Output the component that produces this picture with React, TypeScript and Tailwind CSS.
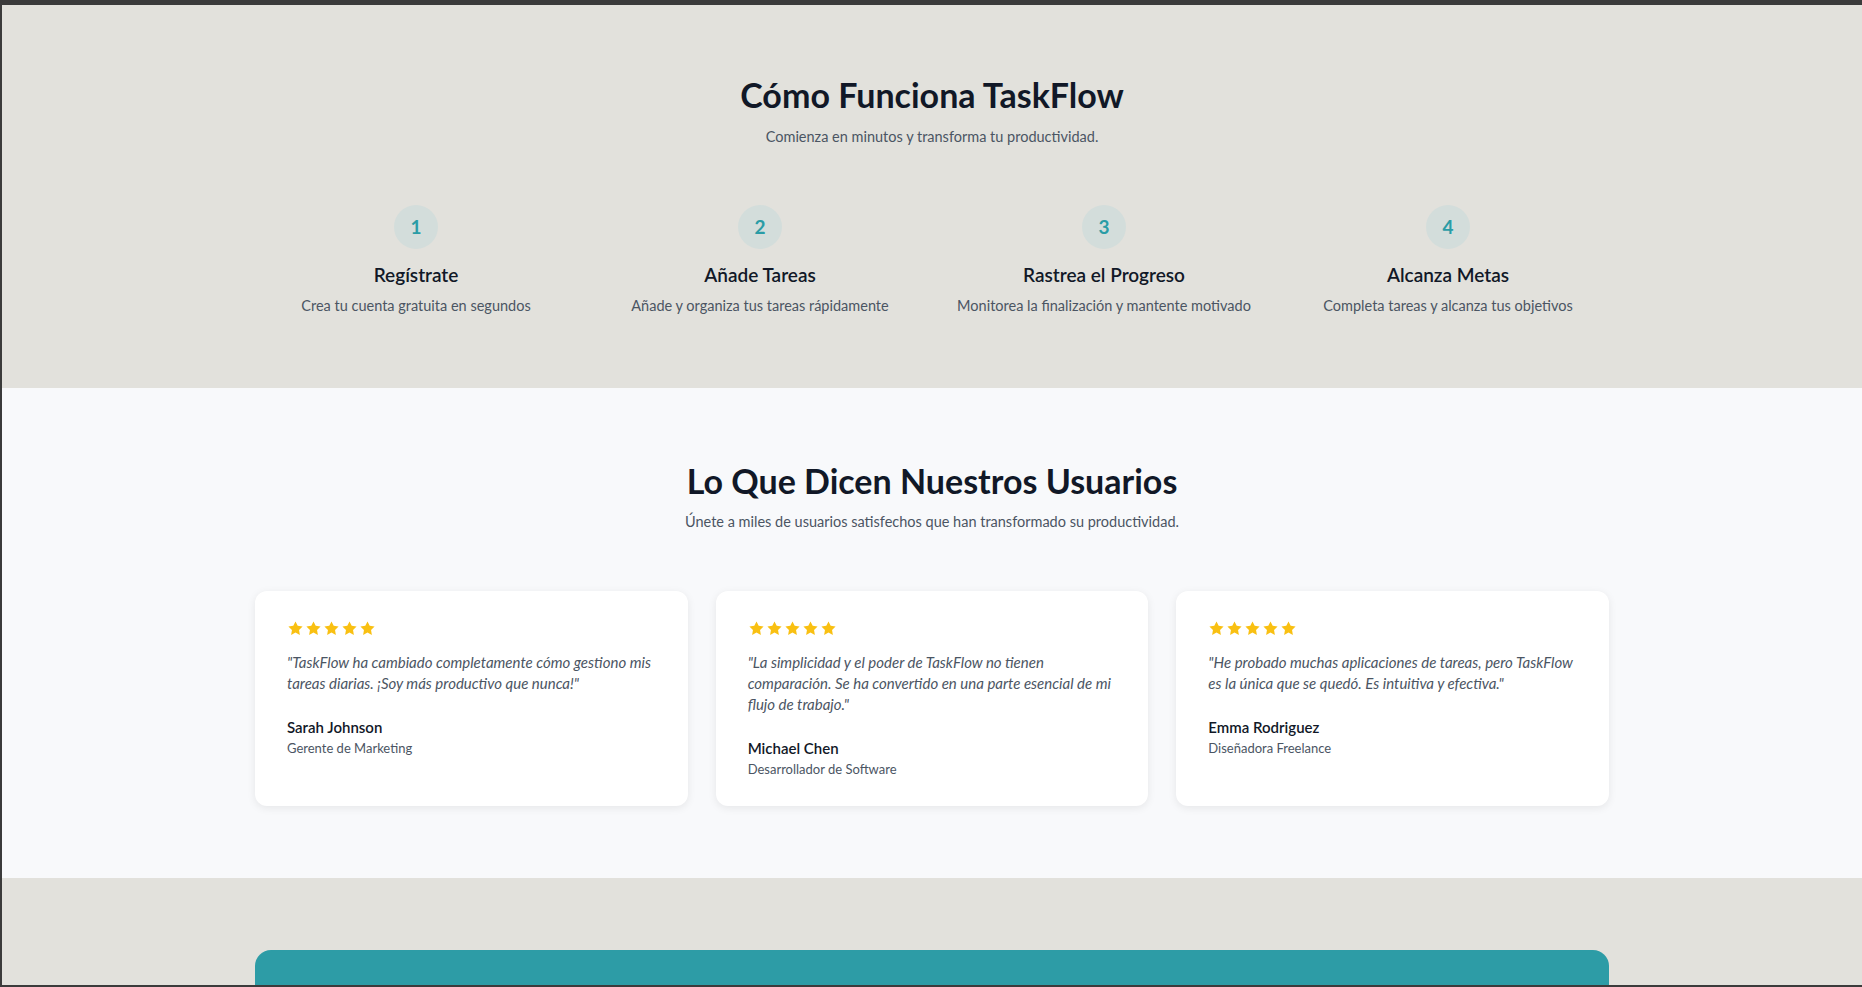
const steps = [
  { n: "1", title: "Regístrate", desc: "Crea tu cuenta gratuita en segundos" },
  { n: "2", title: "Añade Tareas", desc: "Añade y organiza tus tareas rápidamente" },
  { n: "3", title: "Rastrea el Progreso", desc: "Monitorea la finalización y mantente motivado" },
  { n: "4", title: "Alcanza Metas", desc: "Completa tareas y alcanza tus objetivos" },
];

const testimonials = [
  {
    quote: "\"TaskFlow ha cambiado completamente cómo gestiono mis tareas diarias. ¡Soy más productivo que nunca!\"",
    name: "Sarah Johnson",
    role: "Gerente de Marketing",
  },
  {
    quote: "\"La simplicidad y el poder de TaskFlow no tienen comparación. Se ha convertido en una parte esencial de mi flujo de trabajo.\"",
    name: "Michael Chen",
    role: "Desarrollador de Software",
  },
  {
    quote: "\"He probado muchas aplicaciones de tareas, pero TaskFlow es la única que se quedó. Es intuitiva y efectiva.\"",
    name: "Emma Rodriguez",
    role: "Diseñadora Freelance",
  },
];

function Star() {
  return (
    <svg viewBox="0 0 24 24" className="h-[17px] w-[17px] fill-[#f9c012]">
      <path d="M12 2l3.09 6.26L22 9.27l-5 4.87 1.18 6.88L12 17.77l-6.18 3.25L7 14.14 2 9.27l6.91-1.01L12 2z" />
    </svg>
  );
}

export default function App() {
  return (
    <div className="h-[987px] overflow-hidden border-t-[5px] border-b-2 border-l-2 border-[#3b3b3b] font-['Lato',sans-serif]">
      {/* Cómo funciona */}
      <section className="bg-[#e2e1dc] pt-[70px] pb-[71px]">
        <div className="mx-auto w-[1354px]">
          <h2 className="text-center text-[34px] leading-[40px] font-bold text-[#111827]">
            Cómo Funciona TaskFlow
          </h2>
          <p className="mt-[10px] text-center text-[14.5px] leading-6 text-[#4b5563]">
            Comienza en minutos y transforma tu productividad.
          </p>

          <div className="mt-[56px] grid grid-cols-4 gap-[22px]">
            {steps.map((s) => (
              <div key={s.n} className="flex flex-col items-center text-center">
                <div className="flex h-11 w-11 items-center justify-center rounded-full bg-[#d3dddb] text-[19px] font-bold text-[#2a9ca6]">
                  {s.n}
                </div>
                <h3 className="mt-[12px] text-[19px] leading-7 font-semibold text-[#111827]">{s.title}</h3>
                <p className="mt-[6px] text-[14.5px] leading-[22px] text-[#4b5563]">{s.desc}</p>
              </div>
            ))}
          </div>
        </div>
      </section>

      {/* Testimonios */}
      <section className="bg-[#f8f9fb] pt-[73px] pb-[72px]">
        <div className="mx-auto w-[1354px]">
          <h2 className="text-center text-[34px] leading-[40px] font-bold text-[#111827]">
            Lo Que Dicen Nuestros Usuarios
          </h2>
          <p className="mt-[9px] text-center text-[14.5px] leading-6 text-[#4b5563]">
            Únete a miles de usuarios satisfechos que han transformado su productividad.
          </p>

          <div className="mt-[57px] grid grid-cols-3 gap-7">
            {testimonials.map((t) => (
              <div
                key={t.name}
                className="rounded-xl bg-white px-8 pt-[29px] pb-[27px] shadow-[0_2px_8px_rgba(0,0,0,0.08)]"
              >
                <div className="flex gap-px">
                  <Star />
                  <Star />
                  <Star />
                  <Star />
                  <Star />
                </div>
                <p className="mt-[15px] text-[15px] leading-[21px] italic text-[#4b5563]">{t.quote}</p>
                <p className="mt-[22px] text-[15px] leading-[22px] font-semibold text-[#111827]">{t.name}</p>
                <p className="text-[13px] leading-5 text-[#4b5563]">{t.role}</p>
              </div>
            ))}
          </div>
        </div>
      </section>

      {/* CTA */}
      <section className="bg-[#e2e1dc] pt-[72px] pb-20">
        <div className="mx-auto h-[260px] w-[1354px] rounded-2xl bg-[#2d9ca6]" />
      </section>
    </div>
  );
}
